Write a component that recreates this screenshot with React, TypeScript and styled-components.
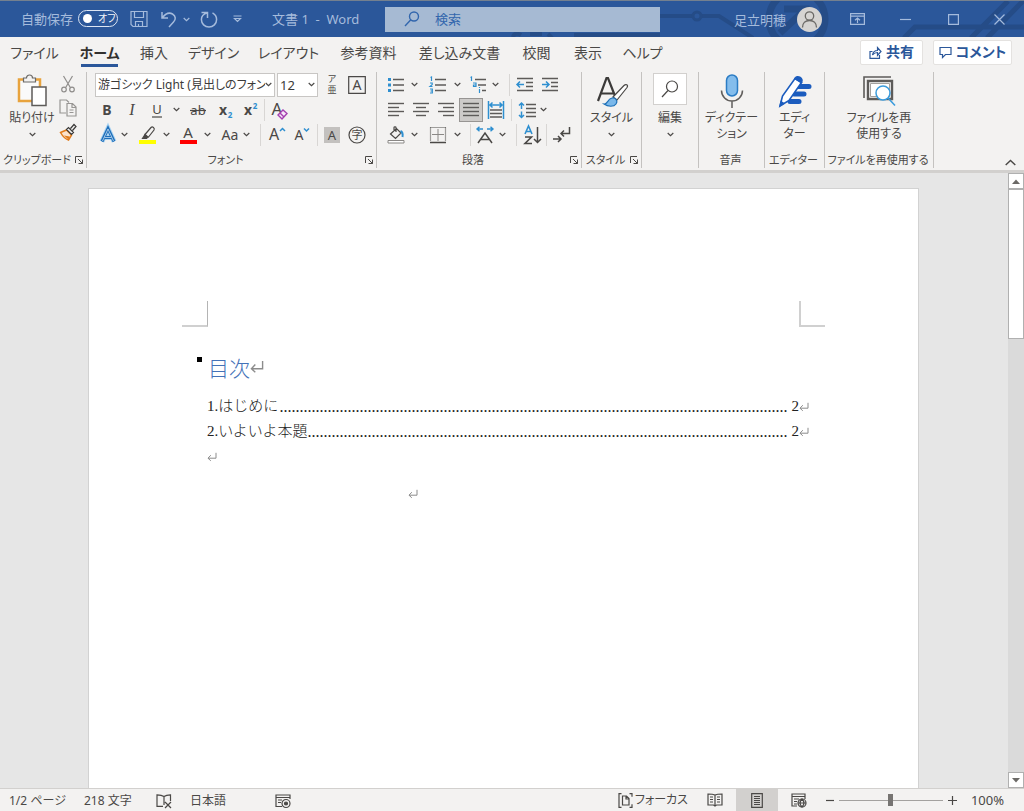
import React from "react";
import styled, { createGlobalStyle, css } from "styled-components";

const ink = "#4a4846";
const blue = "#2b579a";
const sky = "#2e8fd0";
const faint = "#a5bbdc";

const Global = createGlobalStyle`
  * { box-sizing: border-box; }
  html, body { margin: 0; padding: 0; height: 100%; }
  body {
    font-family: "Noto Sans", "Noto Sans CJK JP", sans-serif;
    font-feature-settings: "palt";
    font-size: 12px;
    color: ${ink};
    overflow: hidden;
  }
  button, input, select {
    font: inherit;
    font-feature-settings: "palt";
    color: inherit;
    background: none;
    border: 0;
    padding: 0;
    margin: 0;
  }
  svg { display: block; flex: none; overflow: visible; }
`;

const Shell = styled.div`
  display: flex;
  flex-direction: column;
  height: 100vh;
`;

/* ---------- title bar ---------- */

const TitleBar = styled.header`
  position: relative;
  display: flex;
  align-items: center;
  flex: none;
  height: 37px;
  background: ${blue};
  border-top: 1px solid #74808f;
  color: ${faint};
`;

const Circuit = styled.svg`
  position: absolute;
  top: 0;
  right: 0;
  overflow: hidden;
  pointer-events: none;
`;

const TitleSide = styled.div<{ $end?: boolean }>`
  position: relative;
  display: flex;
  align-items: center;
  ${(p) => (p.$end ? css`flex: 1; justify-content: flex-end;` : css`flex: none; width: 385px; padding-left: 21px;`)}
`;

const AutoSave = styled.label`
  display: flex;
  align-items: center;
  gap: 5px;
  height: 34px;
  padding-bottom: 2px;
  font-size: 13px;
  white-space: nowrap;
`;

const Toggle = styled.span`
  display: flex;
  align-items: center;
  gap: 6px;
  width: 40px;
  height: 17px;
  padding-left: 4px;
  border: 1px solid #dde6f3;
  border-radius: 9px;
  color: #f2f6fb;
  font-size: 10px;
  line-height: 15px;
`;

const ToggleInput = styled.input`
  appearance: none;
  flex: none;
  width: 9px;
  height: 9px;
  border-radius: 50%;
  background: #fff;
`;

const BarButton = styled.button<{ $w: number }>`
  display: flex;
  justify-content: center;
  align-items: center;
  flex: none;
  width: ${(p) => p.$w}px;
  height: 34px;
`;

const DocTitle = styled.span`
  margin-left: 19px;
  padding-bottom: 2px;
  font-size: 13px;
  white-space: pre;
`;

const SearchBox = styled.label`
  position: relative;
  display: flex;
  align-items: center;
  gap: 15px;
  flex: 0 1 275px;
  height: 25px;
  padding-left: 19px;
  background: #a6bad3;
  color: #3266ad;
`;

const SearchInput = styled.input`
  flex: 1;
  min-width: 0;
  font-size: 13px;
  outline: none;
  &::placeholder { color: #3266ad; opacity: 1; }
`;

const User = styled.button`
  display: flex;
  align-items: center;
  gap: 11px;
  margin-right: 14px;
  font-size: 13px;
  white-space: nowrap;
`;

/* ---------- tabs ---------- */

const TabBar = styled.nav`
  display: flex;
  align-items: center;
  flex: none;
  height: 33px;
  padding: 0 12px 0 2px;
  background: #f3f2f1;
`;

const Tab = styled.button<{ $w: number; $active?: boolean }>`
  position: relative;
  flex: none;
  width: ${(p) => p.$w}px;
  height: 33px;
  padding-bottom: 3px;
  font-size: 14px;
  white-space: nowrap;
  ${(p) =>
    p.$active &&
    css`
      font-weight: 700;
      color: #33312f;
      &::after {
        content: "";
        position: absolute;
        left: 14px;
        right: 14px;
        bottom: 3px;
        height: 3px;
        background: ${blue};
      }
    `}
`;

const TabActions = styled.div`
  display: flex;
  gap: 10px;
  height: 27px;
  margin-left: auto;
`;

const ActionButton = styled.button<{ $w: number }>`
  display: flex;
  align-items: center;
  justify-content: center;
  gap: 4px;
  width: ${(p) => p.$w}px;
  height: 25px;
  padding-bottom: 1px;
  background: #fff;
  border: 1px solid #e4e2e0;
  border-radius: 2px;
  color: ${blue};
  font-size: 14px;
  font-weight: 700;
  line-height: 20px;
  white-space: nowrap;
`;

/* ---------- ribbon ---------- */

const Ribbon = styled.div`
  display: flex;
  flex: none;
  height: 103px;
  padding-top: 2px;
  background: #f3f2f1;
  border-bottom: 3px solid #d2d0ce;
`;

const Group = styled.section<{ $w: number }>`
  display: flex;
  flex-direction: column;
  flex: none;
  width: ${(p) => p.$w}px;
  height: 96px;
  border-right: 1px solid #c4c2c0;
`;

const GroupBody = styled.div<{ $pad?: number }>`
  display: flex;
  flex: 1;
  padding-left: ${(p) => p.$pad ?? 0}px;
  ${(p) => p.$pad === undefined && css`justify-content: center;`}
`;

const GroupFooter = styled.footer`
  display: flex;
  align-items: center;
  flex: none;
  height: 16px;
  padding-right: 2px;
`;

const GroupLabel = styled.span`
  flex: 1;
  min-width: 0;
  font-size: 11px;
  line-height: 16px;
  text-align: center;
  white-space: nowrap;
`;

const Rows = styled.div`
  display: flex;
  flex-direction: column;
`;

const Row = styled.div`
  display: flex;
  align-items: center;
  height: 25px;
`;

const Tool = styled.button<{ $w: number; $gap?: number; $on?: boolean }>`
  display: flex;
  justify-content: center;
  align-items: center;
  flex: none;
  width: ${(p) => p.$w}px;
  height: 24px;
  margin-left: ${(p) => p.$gap ?? 0}px;
  font-size: 14px;
  line-height: 24px;
  ${(p) => p.$on && css`background: #cdcbc9; border: 1px solid #979593;`}
`;

const Ruby = styled.button`
  display: flex;
  flex-direction: column;
  align-items: center;
  flex: none;
  width: 28px;
  height: 24px;
  font-size: 9px;
  line-height: 11px;
`;

const Divider = styled.span<{ $w: number }>`
  display: flex;
  justify-content: center;
  flex: none;
  width: ${(p) => p.$w}px;
  height: 22px;
  &::before {
    content: "";
    width: 1px;
    background: #d8d6d4;
  }
`;

const Combo = styled.span<{ $w: number }>`
  display: flex;
  align-items: center;
  flex: none;
  width: ${(p) => p.$w}px;
  height: 24px;
  margin-right: 2px;
  padding-right: 2px;
  background: #fff;
  border: 1px solid #c8c6c4;
  & + & { margin-right: 0; }
`;

const ComboSelect = styled.select<{ $small?: boolean }>`
  appearance: none;
  flex: 1;
  min-width: 0;
  height: 22px;
  padding-left: 2px;
  font-size: ${(p) => (p.$small ? 12 : 13)}px;
  color: #3b3a39;
`;

const Big = styled.button<{ $w: number }>`
  display: flex;
  flex-direction: column;
  align-items: center;
  width: ${(p) => p.$w}px;
  height: 72px;
  font-size: 12px;
  line-height: 16px;
  white-space: nowrap;
`;

const BigIcon = styled.span`
  display: flex;
  align-items: center;
  justify-content: center;
  height: 38px;
`;

const ChevronSlot = styled.span`
  display: flex;
  align-items: center;
  height: 16px;
`;

const WhiteTile = styled.span`
  display: flex;
  align-items: center;
  justify-content: center;
  width: 34px;
  height: 32px;
  margin-bottom: 4px;
  background: #fff;
  border: 1px solid #d2d0ce;
`;

const Collapse = styled.button`
  align-self: flex-end;
  margin: 0 8px 4px auto;
`;

/* ---------- document ---------- */

const Workspace = styled.div`
  display: flex;
  flex: 1;
  min-height: 0;
  background: #e6e6e6;
`;

const Canvas = styled.main`
  display: flex;
  justify-content: center;
  flex: 1;
  min-width: 0;
  padding: 15px 1px 0 0;
  overflow: hidden;
`;

const Page = styled.article`
  flex: 0 1 831px;
  padding: 112px 93px 0;
  background: #fff;
  border: 1px solid #d2d2d2;
  border-bottom: 0;
  color: #222;
`;

const Margins = styled.div`
  display: flex;
  justify-content: space-between;
`;

const Corner = styled.span<{ $right?: boolean }>`
  width: 26px;
  height: 26px;
  border-bottom: 2px solid #d0d0d0;
  ${(p) => (p.$right ? css`border-left: 2px solid #d0d0d0;` : css`border-right: 1px solid #b4b4b4;`)}
`;

const Body = styled.div`
  padding: 22px 16px 0 15px;
`;

const Heading = styled.h1`
  display: flex;
  align-items: center;
  gap: 6px;
  margin: 0 0 9px;
  height: 36px;
  color: #4472b8;
  font-family: "Noto Sans CJK JP", sans-serif;
  font-feature-settings: normal;
  font-size: 21px;
  font-weight: 300;
  line-height: 36px;
  &::before {
    content: "";
    align-self: flex-start;
    width: 5px;
    height: 5px;
    margin-top: 8px;
    background: #000;
  }
`;

const HeadingText = styled.span`
  display: flex;
  align-items: center;
`;

const TocLine = styled.p`
  display: flex;
  align-items: center;
  height: 25px;
  margin: 0;
  padding-left: 10px;
  font-family: "Liberation Serif", "Noto Sans CJK JP", serif;
  font-feature-settings: normal;
  font-size: 15px;
  font-weight: 300;
  line-height: 25px;
  white-space: nowrap;
`;

const Leader = styled.span`
  flex: 1;
  margin-right: 4px;
  font-size: 16px;
  text-align: right;
`;

const Centered = styled(TocLine)`
  margin-top: 12px;
  padding-left: 211px;
`;

const ScrollBar = styled.aside`
  display: flex;
  flex-direction: column;
  flex: none;
  width: 16px;
  background: #dadada;
`;

const ScrollButton = styled.button`
  display: flex;
  align-items: center;
  justify-content: center;
  width: 16px;
  height: 16px;
  background: #fff;
  border: 1px solid #b0b0b0;
`;

const Thumb = styled.span`
  height: 150px;
  margin-bottom: auto;
  background: #fff;
  border: 1px solid #b0b0b0;
`;

/* ---------- status bar ---------- */

const StatusBar = styled.footer`
  display: flex;
  align-items: center;
  flex: none;
  height: 23px;
  padding: 0 20px 0 9px;
  background: #f3f2f1;
  border-top: 1px solid #d2d0ce;
  font-size: 12px;
  line-height: 22px;
`;

const StatusText = styled.button<{ $w: number }>`
  flex: none;
  width: ${(p) => p.$w}px;
  padding-top: 1px;
  text-align: left;
  white-space: nowrap;
`;

const StatusEnd = styled.div`
  display: flex;
  align-items: center;
  margin-left: auto;
`;

const Focus = styled.button`
  display: flex;
  align-items: center;
  gap: 2px;
  width: 76px;
  white-space: nowrap;
`;

const View = styled.button<{ $on?: boolean }>`
  display: flex;
  align-items: center;
  justify-content: center;
  width: 42px;
  height: 22px;
  background: ${(p) => (p.$on ? "#d2d0ce" : "none")};
`;

const Zoom = styled.div`
  display: flex;
  align-items: center;
  gap: 5px;
  margin: 0 14px 0 6px;
`;

const Percent = styled.button`
  font-size: 13px;
`;

const Slider = styled.input`
  appearance: none;
  width: 104px;
  height: 12px;
  background: linear-gradient(#a3a19f, #a3a19f) center / 100% 1px no-repeat;
  &::-webkit-slider-thumb {
    appearance: none;
    width: 5px;
    height: 12px;
    background: #767472;
  }
`;

/* ---------- icons ---------- */

type IconProps = { w?: number; h?: number; s?: string; sw?: number; children: React.ReactNode };
const Ico = ({ w = 18, h = 18, s = ink, sw = 1.2, children }: IconProps) => (
  <svg width={w} height={h} viewBox={`0 0 ${w} ${h}`} fill="none" stroke={s} strokeWidth={sw} aria-hidden="true">
    {children}
  </svg>
);

const Chevron = ({ s = ink }: { s?: string }) => (
  <Ico w={7} h={5} s={s} sw={1.2}><path d="M.7 1l2.800 2.600L6.300 1" /></Ico>
);

const Drop = ({ w, label }: { w: number; label: string }) => (
  <Tool $w={w} aria-label={label}><Chevron /></Tool>
);

const Launcher = ({ label }: { label: string }) => (
  <button aria-label={label}>
    <Ico w={10} h={10} sw={1}><path d="M1.500 8V1.500H8M4 4l4.500 4.500M8.500 4.500v4h-4" /></Ico>
  </button>
);

const Return = ({ big }: { big?: boolean }) => (
  <svg width={big ? 14 : 10} height={big ? 14 : 10} viewBox="0 0 10 10" fill="none" stroke="#8c8c8c" strokeWidth="1" aria-hidden="true">
    <path d="M9 .8v5.400H1M3.800 3.200L1 6.200l2.800 2.600" />
  </svg>
);

const Lines = ({ rows }: { rows: [number, number][] }) => (
  <Ico>
    {rows.map(([a, b], i) => <path key={i} d={`M${a} ${2 + i * 4}.5H${b}`} strokeWidth="1.4" stroke="#5d5b59" />)}
  </Ico>
);

const LetterIcon = ({ x, y, size, fill = ink, weight = 400, children }: { x: number; y: number; size: number; fill?: string; weight?: number; children: string }) => (
  <text x={x} y={y} fontSize={size} fill={fill} stroke="none" fontWeight={weight} textAnchor="middle">{children}</text>
);

const tabs: [string, number][] = [
  ["ファイル", 65], ["ホーム", 65], ["挿入", 44], ["デザイン", 75], ["レイアウト", 75],
  ["参考資料", 85], ["差し込み文書", 97], ["校閲", 57], ["表示", 46], ["ヘルプ", 63],
];

const toc: [string, number, number][] = [["1.はじめに", 127, 2], ["2.いよいよ本題", 120, 2]];

function Title() {
  return (
    <TitleBar>
      <Circuit width="520" height="36" viewBox="504 0 520 36" fill="none" stroke="#254c87" strokeWidth="5">
        <path d="M660 15h32M702 15h17l34 22" strokeWidth="4" />
        <circle cx="697" cy="15" r="4" strokeWidth="3" />
        <circle cx="797" cy="18" r="28" strokeWidth="7" />
        <path d="M784 8h22v18M806 8l-26 24" strokeWidth="7" />
        <path d="M904 37l11-11h109M971 37l37-37M987 37l37-38" />
        <path d="M576 37v-3h84M513 36c1-4 5-4 8-2M530 33h12M548 33l4 4" strokeWidth="4" />
      </Circuit>
      <TitleSide>
        <AutoSave>
          自動保存
          <Toggle><ToggleInput type="checkbox" />オフ</Toggle>
        </AutoSave>
        <BarButton $w={42} aria-label="上書き保存">
          <Ico s={faint}><path d="M1 1.500h16v15H3l-2-2zM4.500 1.500v6h9v-6M5.500 16.500v-5h7v5M8.500 16.500v-2.500" /></Ico>
        </BarButton>
        <BarButton $w={18} aria-label="元に戻す">
          <Ico s={faint} sw={1.5}><path d="M2 2v6h6M2.300 7.700C6 3 10 2.600 12.500 4c3.500 2 3.500 5.500 1 8L9 17" /></Ico>
        </BarButton>
        <BarButton $w={17} aria-label="元に戻すの一覧"><Chevron s={faint} /></BarButton>
        <BarButton $w={27} aria-label="やり直し">
          <Ico s={faint} sw={1.5}><path d="M1.500 2.500h6v5.500M7.200 2.800C3.500 4 1.400 6.400 1.400 9.500a7.600 7.600 0 0 0 15.200 0c0-3-1.600-5.200-4.100-6.600" /></Ico>
        </BarButton>
        <BarButton $w={31} aria-label="クイック アクセスのカスタマイズ">
          <Ico w={9} h={8} s={faint}><path d="M.5 1h8M1.500 3.500l3 3 3-3z" /></Ico>
        </BarButton>
        <DocTitle>文書 1  -  Word</DocTitle>
      </TitleSide>
      <SearchBox>
        <Ico w={16} h={16} s="#3266ad" sw={1.4}><circle cx="10" cy="5.500" r="4.500" /><path d="M6.800 8.800L1 15" /></Ico>
        <SearchInput type="search" placeholder="検索" aria-label="検索" />
      </SearchBox>
      <TitleSide $end>
        <User>
          足立明穂
          <Ico w={25} h={25} s="#6b6966" sw={1.3}>
            <circle cx="12.500" cy="12.500" r="12.500" fill="#d6d4d2" stroke="none" />
            <circle cx="12.500" cy="9" r="4.200" /><path d="M5.500 20.500c0-4.500 3-7 7-7s7 2.500 7 7" />
          </Ico>
        </User>
        <BarButton $w={43} aria-label="リボンの表示オプション">
          <Ico w={15} h={12} s={faint}><path d="M.6.6h13.800v10.800H.6zM.6 3.200h13.800M7.500 10V5M5 7.300L7.500 5 10 7.300" /></Ico>
        </BarButton>
        <BarButton $w={53} aria-label="最小化"><Ico w={11} h={11} s={faint}><path d="M0 5.500h11" /></Ico></BarButton>
        <BarButton $w={43} aria-label="最大化"><Ico w={11} h={11} s={faint}><path d="M.6.6h9.800v9.800H.6z" /></Ico></BarButton>
        <BarButton $w={49} aria-label="閉じる"><Ico w={11} h={11} s={faint}><path d="M.5.5l10 10M10.500.5l-10 10" /></Ico></BarButton>
      </TitleSide>
    </TitleBar>
  );
}

function ClipboardGroup() {
  return (
    <Group $w={87}>
      <GroupBody $pad={5}>
        <Big $w={54}>
          <BigIcon>
            <Ico w={30} h={34}>
              <path d="M2 5.500h21V27H2z" fill="#fafafa" stroke="#e8a33d" strokeWidth="2.500" />
              <path d="M6.500 8V4h3c0-4 6-4 6 0h3v4z" fill="#f3f2f1" stroke="#6b6966" />
              <path d="M15 13h14v18.500H15z" fill="#fff" stroke="#5d5b59" strokeWidth="1.500" />
            </Ico>
          </BigIcon>
          貼り付け
          <ChevronSlot><Chevron /></ChevronSlot>
        </Big>
        <Rows>
          <Tool $w={18} aria-label="切り取り">
            <Ico s="#8f8d8b"><path d="M4.500 1l6.800 11.500M13.500 1L6.700 12.500" /><circle cx="5" cy="14.500" r="2.300" /><circle cx="13" cy="14.500" r="2.300" /></Ico>
          </Tool>
          <Tool $w={18} aria-label="コピー">
            <Ico s="#979593"><path d="M7 14H1V1h6.500L10 3.500M8 4.500h5.500L17 8v9H8zM13 5v3.500h4M10.500 11h4M10.500 13.500h4" /></Ico>
          </Tool>
          <Tool $w={18} aria-label="書式のコピー">
            <Ico><path d="M1.500 9.500l6-2.500 5 5-3 5c-3-1-6-4-8-7.500z" fill="#fbe3cc" stroke="#e07b1a" strokeWidth="1.500" /><path d="M5 12.500l4.500 4 1-3z" fill="#e07b1a" stroke="none" /><path d="M7.500 6.500l2-2 5 5-2 2zM11.500 5.500L15 1.500l2 2L13.500 7.500" fill="#f3f2f1" stroke="#3b3a39" /></Ico>
          </Tool>
        </Rows>
      </GroupBody>
      <GroupFooter><GroupLabel>クリップボード</GroupLabel><Launcher label="クリップボードの設定" /></GroupFooter>
    </Group>
  );
}

function FontGroup() {
  return (
    <Group $w={290}>
      <GroupBody $pad={8}>
        <Rows>
          <Row>
            <Combo $w={180}>
              <ComboSelect $small aria-label="フォント"><option>游ゴシック Light (見出しのフォン</option></ComboSelect>
              <Chevron />
            </Combo>
            <Combo $w={41}>
              <ComboSelect aria-label="フォント サイズ"><option>12</option></ComboSelect>
              <Chevron />
            </Combo>
            <Ruby aria-label="ルビ"><span>ア</span><span>亜</span></Ruby>
            <Tool $w={21} aria-label="囲み線"><Ico><path d="M.7.7h16.600v16.600H.7z" /><LetterIcon x={9} y={14} size={14}>A</LetterIcon></Ico></Tool>
          </Row>
          <Row>
            <Tool $w={24} aria-label="太字"><Ico><LetterIcon x={9} y={14} size={14} weight={700}>B</LetterIcon></Ico></Tool>
            <Tool $w={26} aria-label="斜体"><Ico><g fontStyle="italic" fontFamily="Liberation Serif, serif"><LetterIcon x={9} y={14} size={16}>I</LetterIcon></g></Ico></Tool>
            <Tool $w={22} aria-label="下線"><Ico><LetterIcon x={10} y={13} size={13}>U</LetterIcon><path d="M5 16h10" /></Ico></Tool>
            <Drop w={18} label="下線の種類" />
            <Tool $w={26} aria-label="取り消し線"><Ico><LetterIcon x={9} y={14} size={13}>ab</LetterIcon><path d="M1 9.500h16" /></Ico></Tool>
            <Tool $w={28} aria-label="下付き"><Ico><LetterIcon x={7} y={14} size={14} weight={700}>x</LetterIcon><LetterIcon x={14} y={17} size={8} weight={700} fill={sky}>2</LetterIcon></Ico></Tool>
            <Tool $w={22} aria-label="上付き"><Ico><LetterIcon x={7} y={14} size={14} weight={700}>x</LetterIcon><LetterIcon x={14} y={8} size={8} weight={700} fill={sky}>2</LetterIcon></Ico></Tool>
            <Divider $w={6} />
            <Tool $w={24} aria-label="書式のクリア">
              <Ico><LetterIcon x={7} y={14} size={17}>A</LetterIcon><path d="M8 14l5-5 4 3.500-5 5.500zM10 12l4 4" fill="#f6e6f8" stroke="#a43fb0" strokeWidth="1.400" /></Ico>
            </Tool>
          </Row>
          <Row>
            <Tool $w={25} aria-label="文字の効果">
              <Ico w={20}>
                <path d="M4 15.500L10 2.500l6 13M6.500 11.500h7" stroke="#a9d3f2" strokeWidth="5" />
                <path d="M4 15.500L10 2.500l6 13M6.500 11.500h7" stroke="#1f6fba" strokeWidth="3" />
                <path d="M4.500 15L10 3l5.500 12M6.500 11.500h7" stroke="#d8ebf9" strokeWidth=".7" />
              </Ico>
            </Tool>
            <Drop w={8} label="文字の効果の種類" />
            <Tool $w={24} $gap={7} aria-label="蛍光ペン">
              <Ico w={17}><path d="M0 14h17v4H0z" fill="#ffff00" stroke="none" /><path d="M6 8.500L12 1.500c1.500-1.500 4 .5 3 2.500L9.500 11H6z" /><path d="M6 8.500L3.500 12.500h4L9 11z" fill={ink} /></Ico>
            </Tool>
            <Drop w={14} label="蛍光ペンの色" />
            <Tool $w={24} $gap={3} aria-label="フォントの色">
              <Ico w={17}><path d="M0 14h17v4H0z" fill="#ff0000" stroke="none" /><LetterIcon x={8} y={12} size={15}>A</LetterIcon></Ico>
            </Tool>
            <Drop w={14} label="フォントの色の一覧" />
            <Tool $w={22} $gap={5}>Aa</Tool>
            <Drop w={10} label="文字種の変換" />
            <Divider $w={18} />
            <Tool $w={15} aria-label="フォントの拡大"><Ico><LetterIcon x={6} y={14} size={16}>A</LetterIcon><path d="M12 5l2.500-2.500L17 5" stroke={sky} strokeWidth="1.500" /></Ico></Tool>
            <Tool $w={22} $gap={7} aria-label="フォントの縮小"><Ico><LetterIcon x={6} y={14} size={14}>A</LetterIcon><path d="M11 2.500L13.500 5 16 2.500" stroke={sky} strokeWidth="1.500" /></Ico></Tool>
            <Divider $w={8} />
            <Tool $w={21} aria-label="文字の網かけ"><Ico><path d="M1 1h16v16H1z" fill="#c3c1bf" stroke="none" /><LetterIcon x={9} y={14} size={13}>A</LetterIcon></Ico></Tool>
            <Tool $w={21} $gap={4} aria-label="囲い文字"><Ico><circle cx="9" cy="9" r="8" /><LetterIcon x={9} y={13} size={11}>字</LetterIcon></Ico></Tool>
          </Row>
        </Rows>
      </GroupBody>
      <GroupFooter><GroupLabel>フォント</GroupLabel><Launcher label="フォントの設定" /></GroupFooter>
    </Group>
  );
}

function ParagraphGroup() {
  return (
    <Group $w={205}>
      <GroupBody $pad={8}>
        <Rows>
          <Row>
            <Tool $w={22} aria-label="箇条書き">
              <Ico><path d="M6 3.500h11M6 9h11M6 14.500h11" stroke="#5d5b59" strokeWidth="1.400" /><path d="M1 3.500h3M1 9h3M1 14.500h3" stroke={sky} strokeWidth="3" /></Ico>
            </Tool>
            <Drop w={15} label="箇条書きの種類" />
            <Tool $w={22} $gap={5} aria-label="段落番号">
              <Ico><path d="M6 3.500h11M6 9h11M6 14.500h11" stroke="#5d5b59" strokeWidth="1.400" /><path d="M1.500 1.500L2.500 1v4M1 7h2.200v1.600L1 10.500h2.500M1 13h2.300v4H1M1.500 15h2" stroke={sky} strokeWidth="1.200" /></Ico>
            </Tool>
            <Drop w={16} label="段落番号の種類" />
            <Tool $w={24} $gap={1} aria-label="アウトライン">
              <Ico><path d="M6 3.500h11M9 9h8M13 14.500h4" stroke="#5d5b59" strokeWidth="1.400" /><path d="M1.500 1.500L2.500 1v4M4 7h3v3.500H4.500V9H7M10.500 13v4M10.500 11v1" stroke={sky} strokeWidth="1.200" /></Ico>
            </Tool>
            <Drop w={10} label="アウトラインの種類" />
            <Divider $w={18} />
            <Tool $w={14} aria-label="インデントを減らす">
              <Ico w={16}><path d="M0 2.500h16M9 6.500h7M9 10.500h7M0 14.500h16" stroke="#5d5b59" strokeWidth="1.400" /><path d="M7 8.500H0M3 5.500l-3 3 3 3" stroke={sky} strokeWidth="1.500" /></Ico>
            </Tool>
            <Tool $w={26} $gap={5} aria-label="インデントを増やす">
              <Ico w={16}><path d="M0 2.500h16M9 6.500h7M9 10.500h7M0 14.500h16" stroke="#5d5b59" strokeWidth="1.400" /><path d="M0 8.500h7M4 5.500l3 3-3 3" stroke={sky} strokeWidth="1.500" /></Ico>
            </Tool>
          </Row>
          <Row>
            <Tool $w={22} aria-label="左揃え"><Lines rows={[[1, 17], [1, 12], [1, 17], [1, 12]]} /></Tool>
            <Tool $w={22} $gap={3} aria-label="中央揃え"><Lines rows={[[1, 17], [4, 14], [1, 17], [4, 14]]} /></Tool>
            <Tool $w={22} $gap={3} aria-label="右揃え"><Lines rows={[[1, 17], [6, 17], [1, 17], [6, 17]]} /></Tool>
            <Tool $w={24} $gap={2} $on aria-label="両端揃え"><Lines rows={[[1, 17], [1, 17], [1, 17], [1, 17]]} /></Tool>
            <Tool $w={22} $gap={2} aria-label="均等割り付け">
              <Ico><path d="M1.500 0v18M16.500 0v18M3 4h12M5.500 1.500L3 4l2.500 2.500M12.500 1.500L15 4l-2.500 2.500" stroke={sky} strokeWidth="1.500" /><path d="M3 9h12M3 12.500h12M3 16h12" stroke="#5d5b59" strokeWidth="1.400" /></Ico>
            </Tool>
            <Divider $w={8} />
            <Tool $w={24} aria-label="行と段落の間隔">
              <Ico><path d="M8 3.500h10M8 7.500h10M8 11.500h10M8 15.500h10" stroke="#5d5b59" strokeWidth="1.400" /><path d="M3.500 8V2M1 4.500L3.500 2 6 4.500M3.500 10.500v6M1 14l2.500 2.500L6 14" stroke={sky} strokeWidth="1.500" /></Ico>
            </Tool>
            <Drop w={9} label="行間の一覧" />
          </Row>
          <Row>
            <Tool $w={22} aria-label="塗りつぶし">
              <Ico><path d="M1 14.500h16V17H1z" fill="#fff" stroke="#8a8886" strokeWidth="1" /><path d="M3.500 8L9.500 2.500 14 7l-5.500 5.500zM7 5V1.500c0-1 2-1 2 0V6" /><path d="M13.500 5c2 1 2.500 3 2 6" stroke={sky} strokeWidth="2" /></Ico>
            </Tool>
            <Drop w={15} label="塗りつぶしの色" />
            <Tool $w={22} $gap={5} aria-label="罫線">
              <Ico><path d="M1.500 1.500h15M1.500 1.500v14M16.500 1.500v14" strokeDasharray="1 1" /><path d="M9 3v12M3 8.500h12" stroke="#8a8886" strokeWidth="1" /><path d="M1 16.500h16" strokeWidth="1.500" /></Ico>
            </Tool>
            <Drop w={16} label="罫線の種類" />
            <Divider $w={10} />
            <Tool $w={20} aria-label="拡張書式">
              <Ico><path d="M2 17L9 7l7 10M4.500 13.500h9" strokeWidth="1.500" /><path d="M1 3h6M3.500.8L1 3l2.500 2.200M17 3h-6M14.500.8L17 3l-2.500 2.200" stroke={sky} strokeWidth="1.400" /></Ico>
            </Tool>
            <Drop w={14} label="拡張書式の一覧" />
            <Divider $w={14} />
            <Tool $w={20} aria-label="並べ替え">
              <Ico h={20}>
                <path d="M1 9L4.500 1 8 9M2.200 6.500h4.600" stroke={sky} strokeWidth="1.600" />
                <path d="M1 12h6.500L1 18.500h7" strokeWidth="1.600" />
                <path d="M13.500 2v15.500M10 14l3.500 3.500L17 14" strokeWidth="1.500" />
              </Ico>
            </Tool>
            <Divider $w={6} />
            <Tool $w={24} $gap={1} aria-label="編集記号の表示">
              <Ico><path d="M16.500 1v6.500H8M11 4.500l-3 3 3 3M0 13h8M5 10l3 3-3 3" strokeWidth="1.500" /></Ico>
            </Tool>
          </Row>
        </Rows>
      </GroupBody>
      <GroupFooter><GroupLabel>段落</GroupLabel><Launcher label="段落の設定" /></GroupFooter>
    </Group>
  );
}

function RightGroups() {
  return (
    <>
      <Group $w={60}>
        <GroupBody>
          <Big $w={56}>
            <BigIcon>
              <Ico w={34} h={32}>
                <path d="M3 26L11.500 3h1.500l7 18M6 18.500h12" stroke="#3b3a39" strokeWidth="2.200" />
                <path d="M18 22L29 10.500c2-2 4.500-.5 3 2L22 25z" fill="#fff" />
                <path d="M9 29c4 .5 3-5 8-6 4-.5 6 3 4 6s-8 3-12 0z" fill="#7ab8ea" stroke="#2072b8" />
              </Ico>
            </BigIcon>
            スタイル
            <ChevronSlot><Chevron /></ChevronSlot>
          </Big>
        </GroupBody>
        <GroupFooter><GroupLabel>スタイル</GroupLabel><Launcher label="スタイルの設定" /></GroupFooter>
      </Group>
      <Group $w={57}>
        <GroupBody>
          <Big $w={52}>
            <BigIcon>
              <WhiteTile><Ico><circle cx="11" cy="6.500" r="5.500" /><path d="M7 10.500L1 17" /></Ico></WhiteTile>
            </BigIcon>
            編集
            <ChevronSlot><Chevron /></ChevronSlot>
          </Big>
        </GroupBody>
      </Group>
      <Group $w={66}>
        <GroupBody>
          <Big $w={60}>
            <BigIcon>
              <Ico w={24} h={34}>
                <rect x="6.500" y="1" width="11" height="21" rx="5.500" fill="#84bdec" stroke="#2b7cc4" strokeWidth="1.500" />
                <path d="M1.500 16.500a10.500 10.500 0 0 0 21 0M12 27v7" stroke="#605e5c" strokeWidth="1.500" />
              </Ico>
            </BigIcon>
            ディクテー<br />ション
          </Big>
        </GroupBody>
        <GroupFooter><GroupLabel>音声</GroupLabel></GroupFooter>
      </Group>
      <Group $w={60}>
        <GroupBody>
          <Big $w={56}>
            <BigIcon>
              <Ico w={34} h={34} s="#1b5cbe">
                <path d="M20 12.500h11M16 20h10M12 27.500h9" strokeWidth="5" strokeLinecap="round" />
                <path d="M2 32l2.500-10L17 4.500l6.500 4L11 26.500z" fill="#fff" strokeWidth="1.600" />
                <path d="M17 4.500c2-4 8.500-.5 6.500 4z" fill="#1b5cbe" strokeWidth="1.600" />
                <path d="M2 32l1-4.500 3 2z" fill="#1b5cbe" />
              </Ico>
            </BigIcon>
            エディ<br />ター
          </Big>
        </GroupBody>
        <GroupFooter><GroupLabel>エディター</GroupLabel></GroupFooter>
      </Group>
      <Group $w={109}>
        <GroupBody>
          <Big $w={90}>
            <BigIcon>
              <Ico w={32} h={30} s="#5d5b59">
                <path d="M1 22V1h27" strokeWidth="1.600" />
                <path d="M5 23V5h24v18z" fill="#fff" strokeWidth="2.400" />
                <path d="M7.500 20.500V7.500h19v13z" stroke="#a3a19f" strokeWidth="1" />
                <circle cx="20" cy="17" r="7" fill="#fff" stroke="#3a9bdc" strokeWidth="1.500" />
                <path d="M25 22l7 7.500" stroke="#3a9bdc" strokeWidth="1.600" />
              </Ico>
            </BigIcon>
            ファイルを再<br />使用する
          </Big>
        </GroupBody>
        <GroupFooter><GroupLabel>ファイルを再使用する</GroupLabel></GroupFooter>
      </Group>
      <Collapse aria-label="リボンを折りたたむ"><Ico w={11} h={7} sw={1.4}><path d="M.7 6l4.800-4.600L10.300 6" /></Ico></Collapse>
    </>
  );
}

export default function App() {
  return (
    <Shell>
      <Global />
      <Title />
      <TabBar>
        {tabs.map(([name, w]) => <Tab key={name} $w={w} $active={name === "ホーム"}>{name}</Tab>)}
        <TabActions>
          <ActionButton $w={63}>
            <Ico w={13} h={13} s={blue}><path d="M3.500 5.500H1v6.800h9.500V9M3.500 9c.5-3 2-4.500 5-4.500V1.500L12 5.500l-3.500 4v-3C6 6.500 5 7 3.500 9z" /></Ico>
            共有
          </ActionButton>
          <ActionButton $w={79}>
            <Ico w={13} h={13} s={blue}><path d="M1 1.500h11v7H6.500L3.500 11.500v-3H1z" /></Ico>
            コメント
          </ActionButton>
        </TabActions>
      </TabBar>
      <Ribbon>
        <ClipboardGroup />
        <FontGroup />
        <ParagraphGroup />
        <RightGroups />
      </Ribbon>
      <Workspace>
        <Canvas>
          <Page>
            <Margins><Corner /><Corner $right /></Margins>
            <Body>
              <Heading><HeadingText>目次<Return big /></HeadingText></Heading>
              {toc.map(([name, dots, page]) => (
                <TocLine key={name}>
                  {name}
                  <Leader>{".".repeat(dots)}</Leader>
                  {page}
                  <Return />
                </TocLine>
              ))}
              <TocLine><Return /></TocLine>
              <Centered><Return /></Centered>
            </Body>
          </Page>
        </Canvas>
        <ScrollBar>
          <ScrollButton aria-label="上へスクロール"><Ico w={8} h={5} s="none"><path d="M0 5l4-4.500L8 5z" fill="#6b6966" /></Ico></ScrollButton>
          <Thumb />
          <ScrollButton aria-label="下へスクロール"><Ico w={8} h={5} s="none"><path d="M0 0l4 4.500L8 0z" fill="#6b6966" /></Ico></ScrollButton>
        </ScrollBar>
      </Workspace>
      <StatusBar>
        <StatusText $w={75}>1/2 ページ</StatusText>
        <StatusText $w={72}>218 文字</StatusText>
        <StatusText $w={34} aria-label="文章校正">
          <Ico w={16} h={14}><path d="M8 2.500C6 1 3.500.8 1 .8v11.500h6M8 2.500C10 1 12 .8 14.500.8V7M8 2.500V11M9 8l6 6M15 8l-6 6" /></Ico>
        </StatusText>
        <StatusText $w={85}>日本語</StatusText>
        <StatusText $w={20} aria-label="マクロの記録">
          <Ico w={16} h={14}><path d="M7 12.500H1V1h14v4M1 3.500h14M3 6h4M3 8.500h3" /><circle cx="11" cy="9.500" r="4" /><circle cx="11" cy="9.500" r="1.500" fill={ink} /></Ico>
        </StatusText>
        <StatusEnd>
          <Focus>
            <Ico w={15} h={15}><path d="M3.500.7H1v13.600h2.500M11.500.7H14v3M11.500 14.300H14v-3M4.500 3h4L11 5.500V12H4.500zM8 3v3h3" /></Ico>
            フォーカス
          </Focus>
          <View aria-label="閲覧モード">
            <Ico w={16} h={14}><path d="M8 2C6 1 3.500 1 1 1v11h5.500L8 13l1.500-1H15V1c-2.500 0-5 0-7 1zM8 2v11M3 4h3M3 6.500h3M3 9h3M10 4h3M10 6.500h3M10 9h3" /></Ico>
          </View>
          <View $on aria-label="印刷レイアウト">
            <Ico w={12} h={15}><path d="M.7.7h10.600v13.600H.7zM3 3.500h6M3 5.500h6M3 7.500h6M3 9.500h6M3 11.500h6" /></Ico>
          </View>
          <View aria-label="Web レイアウト">
            <Ico w={16} h={15}><path d="M6 13H1V1h13v5M1 3.500h13M3 6h5M3 8.500h3M3 11h3" /><circle cx="11" cy="10" r="4" /><path d="M7 10h8M11 6c-2.500 2.500-2.500 5.500 0 8 2.500-2.500 2.500-5.500 0-8z" /></Ico>
          </View>
          <Zoom>
            <button aria-label="縮小"><Ico w={8} h={9}><path d="M0 4.500h8" /></Ico></button>
            <Slider type="range" min="0" max="100" defaultValue="50" aria-label="ズーム" />
            <button aria-label="拡大"><Ico w={9} h={9}><path d="M0 4.500h9M4.500 0v9" /></Ico></button>
          </Zoom>
          <Percent>100%</Percent>
        </StatusEnd>
      </StatusBar>
    </Shell>
  );
}
